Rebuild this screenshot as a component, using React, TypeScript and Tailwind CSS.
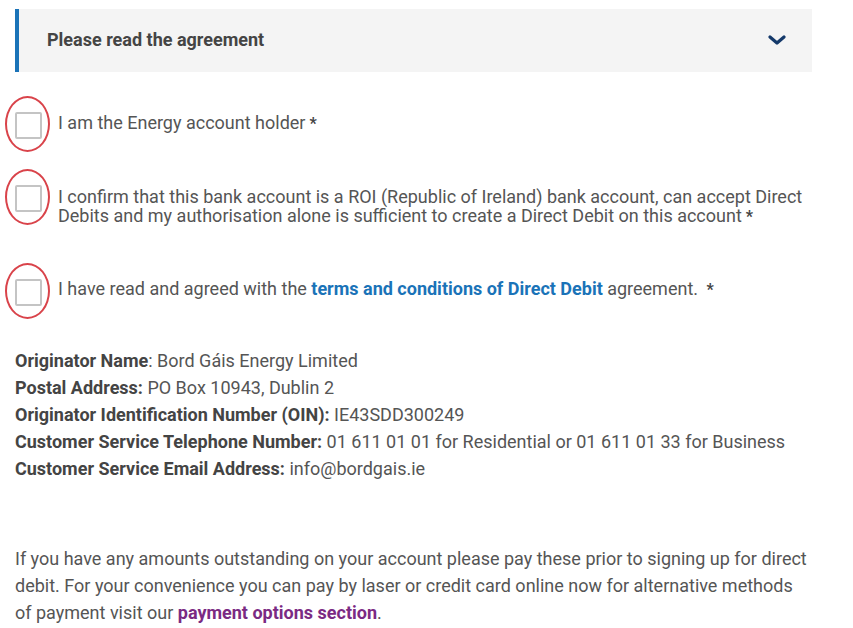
import React from "react";

function Check() {
  return (
    <span className="relative flex h-[27px] w-[27px] shrink-0 items-center justify-center">
      <span className="h-[27px] w-[27px] rounded-[2px] border-2 border-[#c4c4c4] bg-white" />
      <span className="pointer-events-none absolute left-[-10px] top-[-16px] h-[56px] w-[45px] rounded-[50%] border-2 border-[#d9434a]" />
    </span>
  );
}

function Star() {
  return <span className="ml-[4px] text-[16px] font-bold text-[#444]">*</span>;
}

export default function App() {
  return (
    <div
      className="min-h-screen w-[853px] bg-white pt-[9px] text-[#555]"
      style={{ fontFamily: "Roboto, 'Liberation Sans', sans-serif" }}
    >
      <div className="ml-[15px] w-[797px]">
        <div className="flex h-[63px] items-center justify-between border-l-4 border-[#1a73b8] bg-[#f4f4f4] pb-[2px] pl-[28px] pr-[26px]">
          <span className="text-[18px] font-bold text-[#444]">Please read the agreement</span>
          <svg width="18" height="12" viewBox="0 0 18 12" fill="none">
            <path d="M2 3l7 6 7-6" stroke="#14396a" strokeWidth="3.2" strokeLinecap="round" strokeLinejoin="round" />
          </svg>
        </div>

        <div className="mt-[40px] flex items-start gap-[16px]">
          <Check />
          <p className="text-[18px] leading-[20px] pt-[1px]">
            I am the Energy account holder<Star />
          </p>
        </div>

        <div className="mt-[46px] flex items-start gap-[16px]">
          <Check />
          <p className="text-[18px] leading-[19px] pt-[2px]">
            I confirm that this bank account is a ROI (Republic of Ireland) bank account, can accept Direct Debits and my
            authorisation alone is sufficient to create a Direct Debit on this account<Star />
          </p>
        </div>

        <div className="mt-[53px] flex items-start gap-[16px]">
          <Check />
          <p className="text-[18px] leading-[20px]">
            I have read and agreed with the{" "}
            <a className="font-bold text-[#1a73b8]">terms and conditions of Direct Debit</a> agreement.{" "}
            <Star />
          </p>
        </div>

        <div className="mt-[41px] text-[18px] leading-[27px]">
          <p>
            <b className="text-[#444]">Originator Name</b>: Bord Gáis Energy Limited
          </p>
          <p>
            <b className="text-[#444]">Postal Address:</b> PO Box 10943, Dublin 2
          </p>
          <p>
            <b className="text-[#444]">Originator Identification Number (OIN):</b> IE43SDD300249
          </p>
          <p>
            <b className="text-[#444]">Customer Service Telephone Number:</b> 01 611 01 01 for Residential or 01 611 01 33
            for Business
          </p>
          <p>
            <b className="text-[#444]">Customer Service Email Address:</b> info@bordgais.ie
          </p>
        </div>

        <p className="mt-[63px] text-[18px] leading-[27px]">
          If you have any amounts outstanding on your account please pay these prior to signing up for direct debit. For
          your convenience you can pay by laser or credit card online now for alternative methods of payment visit our{" "}
          <a className="font-bold text-[#7b2a83]">payment options section</a>.
        </p>
      </div>
    </div>
  );
}
